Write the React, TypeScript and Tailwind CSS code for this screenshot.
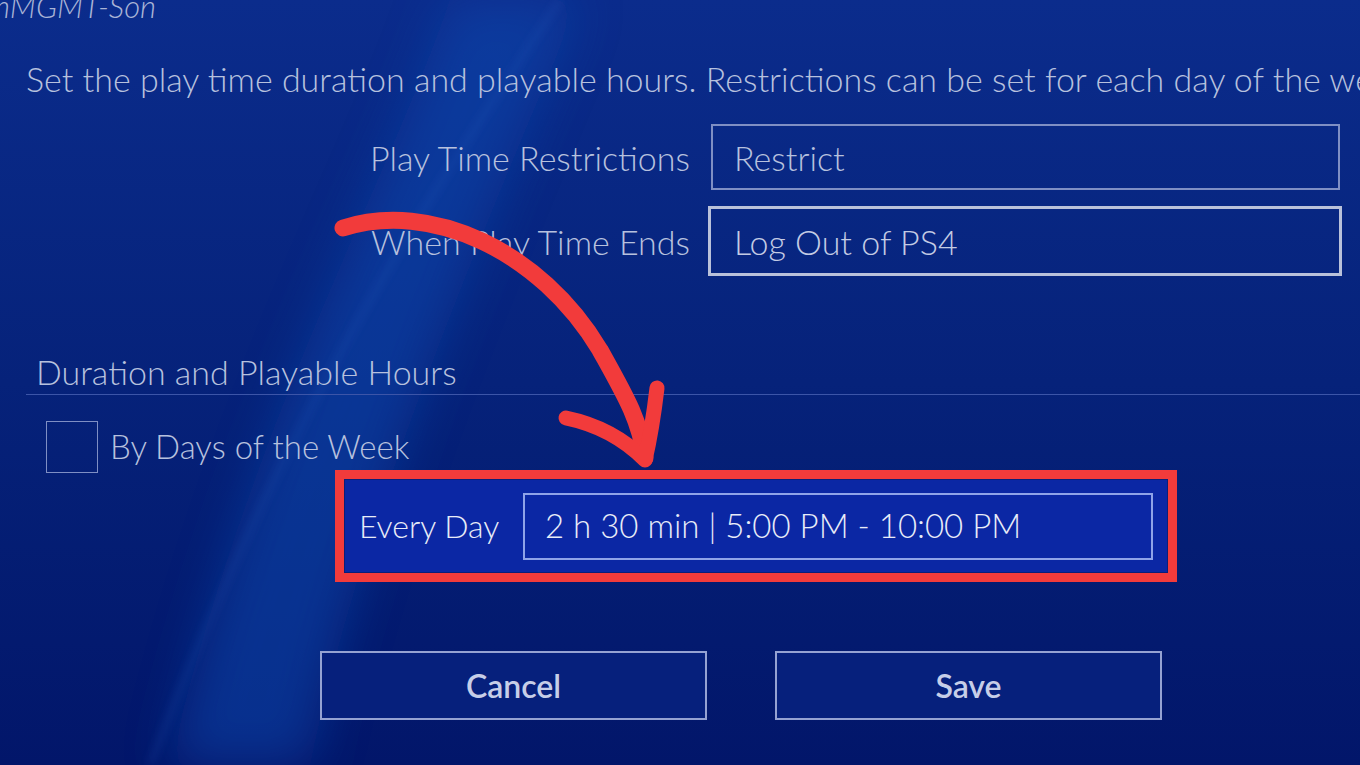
import React from "react";

const font = { fontFamily: "Lato, 'Open Sans', sans-serif" };

const Row = ({ label, value, focused }: { label: string; value: string; focused?: boolean }) => (
  <div className="flex items-center">
    <div className="w-[690px] text-right text-[34px] font-light text-[#b7c1de] whitespace-nowrap">{label}</div>
    <div
      className={
        focused
          ? "ml-[18px] w-[634px] h-[70px] border-[3px] border-[#b9c1da] flex items-center pl-[23px] text-[34px] font-light text-[#c3cbe4]"
          : "ml-[21px] w-[629px] h-[66px] border-2 border-[#7f8fc4] flex items-center pl-[21px] text-[34px] font-light text-[#b7c1de]"
      }
    >
      {value}
    </div>
  </div>
);

export default function App() {
  return (
    <div
      className="relative w-[1360px] h-[765px] overflow-hidden bg-gradient-to-b from-[#0b2c8c] via-[#06227a] to-[#02166a]"
      style={font}
    >
      {/* background wave */}
      <svg className="absolute inset-0 pointer-events-none" width="1360" height="765" viewBox="0 0 1360 765">
        <defs>
          <filter id="blur" x="-50%" y="-50%" width="200%" height="200%">
            <feGaussianBlur stdDeviation="24" />
          </filter>
          <filter id="blur2" x="-50%" y="-50%" width="200%" height="200%">
            <feGaussianBlur stdDeviation="4" />
          </filter>
        </defs>
        <path d="M450 0 C 390 180, 250 420, 170 765 L 310 765 C 360 520, 470 260, 580 0 Z" fill="#1149b0" opacity="0.5" filter="url(#blur)" />
        <path d="M560 0 C 440 180, 290 400, 150 765" stroke="#2a63c4" strokeWidth="5" fill="none" opacity="0.22" filter="url(#blur2)" />
      </svg>

      <div className="relative">
        <div className="-mt-[14px] -ml-[6px] text-[31px] italic font-light text-[#a9b4d6] leading-[40px] whitespace-nowrap">nMGMT-Son</div>

        <div className="mt-[33px] ml-[26px] text-[34px] font-light text-[#b7c1de] whitespace-nowrap leading-[40px]">
          Set the play time duration and playable hours. Restrictions can be set for each day of the week.
        </div>

        <div className="mt-[25px] flex flex-col gap-[16px]">
          <Row label="Play Time Restrictions" value="Restrict" />
          <Row label="When Play Time Ends" value="Log Out of PS4" focused />
        </div>

        <div className="mt-[76px] ml-[26px] border-b border-[#3c55a8] pb-[2px]">
          <div className="ml-[10px] text-[34px] font-light text-[#b7c1de] leading-[40px]">Duration and Playable Hours</div>
        </div>

        <div className="mt-[26px] ml-[46px] flex items-center">
          <div className="w-[52px] h-[52px] border border-[#7f8fc4]" />
          <div className="ml-[12px] text-[33px] font-light text-[#b7c1de]">By Days of the Week</div>
        </div>

        <div className="ml-[335px] -mt-[3px] w-[842px] h-[112px] border-[9px] border-[#f23b3b] bg-[#0a1f78] p-[1px]">
          <div className="h-full bg-[#0b27a4] flex items-center pl-[14px]">
            <div className="text-[32px] font-light text-[#e8ecf8] w-[164px] whitespace-nowrap">Every Day</div>
            <div className="w-[630px] h-[67px] border-2 border-[#8fa3e8] flex items-center pl-[20px] text-[33px] font-light text-[#e8ecf8] whitespace-nowrap">
              2 h 30 min | 5:00 PM - 10:00 PM
            </div>
          </div>
        </div>

        <div className="mt-[69px] ml-[320px] flex gap-[68px]">
          <button className="w-[387px] h-[69px] border-2 border-[#95a2d2] text-[32px] font-semibold text-[#c6cee8] bg-[#06207c]">Cancel</button>
          <button className="w-[387px] h-[69px] border-2 border-[#95a2d2] text-[32px] font-semibold text-[#c6cee8] bg-[#06207c]">Save</button>
        </div>
      </div>

      {/* red arrow annotation */}
      <svg className="absolute inset-0 pointer-events-none" width="1360" height="765" viewBox="0 0 1360 765">
        <path
          d="M343 228 C 430 200, 540 250, 600 350 C 625 395, 640 420, 645 458"
          stroke="#f23b3b"
          strokeWidth="17"
          strokeLinecap="round"
          fill="none"
        />
        <path
          d="M566 418 C 600 425, 625 440, 645 460 C 652 430, 655 405, 657 388"
          stroke="#f23b3b"
          strokeWidth="15"
          strokeLinecap="round"
          strokeLinejoin="round"
          fill="none"
        />
      </svg>
    </div>
  );
}
